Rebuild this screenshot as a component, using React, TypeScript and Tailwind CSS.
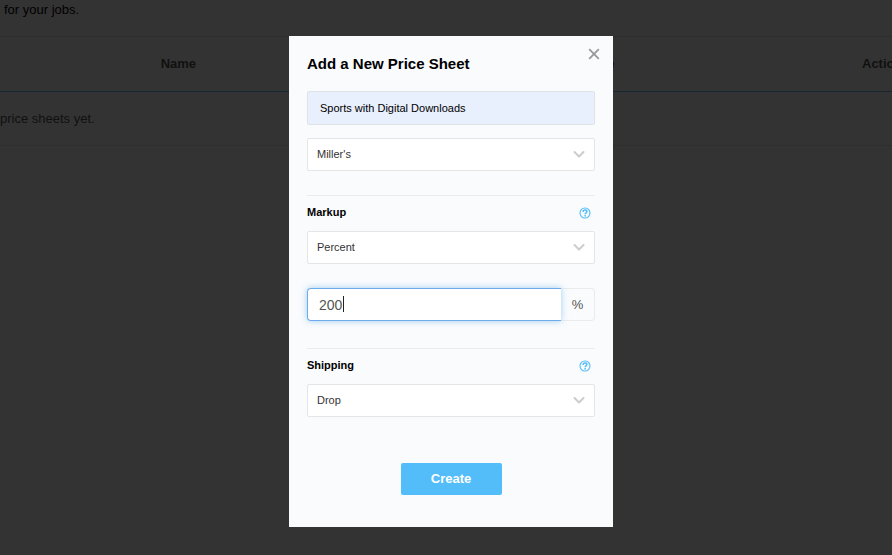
import { useState } from "react";
import type { ReactNode } from "react";

const vendors = ["Miller's", "WHCC", "Bay Photo"];
const markupTypes = ["Percent", "Fixed"];
const shippingTypes = ["Drop", "Bulk"];

function HelpIcon() {
  return (
    <svg width="12" height="12" viewBox="0 0 12 12" fill="none" stroke="#53bdf9" aria-hidden="true">
      <circle cx="6" cy="6" r="5" strokeWidth="1.1" />
      <path d="M4.1 4.9C4.1 3.7 4.9 3 6 3s1.9.7 1.9 1.6c0 1.3-1.8 1.3-1.8 2.6" strokeWidth="1.5" />
      <path d="M6.1 7.9v1.5" strokeWidth="1.5" />
    </svg>
  );
}

type SelectProps = {
  id: string;
  label?: string;
  options: string[];
};

function Select({ id, label, options }: SelectProps) {
  const [value, setValue] = useState(options[0]);

  return (
    <div className="relative">
      <select
        id={id}
        aria-label={label}
        value={value}
        onChange={(e) => setValue(e.target.value)}
        className="block h-[33px] w-full appearance-none rounded-xs border border-[#e3e5e7] bg-white pr-8 pl-[9px] text-[11px] text-[#333] outline-none"
      >
        {options.map((option) => (
          <option key={option}>{option}</option>
        ))}
      </select>
      <svg
        className="pointer-events-none absolute top-3 right-[10px]"
        width="12"
        height="8"
        viewBox="0 0 12 8"
        fill="none"
        stroke="#ccc"
        strokeWidth="2"
        strokeLinecap="round"
        strokeLinejoin="round"
        aria-hidden="true"
      >
        <path d="M1.5 2L6 6.5 10.5 2" />
      </svg>
    </div>
  );
}

function SectionHeader({ htmlFor, children }: { htmlFor: string; children: ReactNode }) {
  return (
    <div className="flex h-9 items-start justify-between border-t border-[#e9ebed] pt-2 pr-1">
      <label htmlFor={htmlFor} className="text-[11px] leading-4 font-bold text-black">
        {children}
      </label>
      <button type="button" aria-label="Help" className="flex h-[18px] items-center">
        <HelpIcon />
      </button>
    </div>
  );
}

function PriceSheetTable() {
  return (
    <main className="overflow-hidden">
      <p className="h-9 px-1 text-[13px] leading-5 text-black">for your jobs.</p>
      <table className="w-full table-fixed border-collapse text-[13px] whitespace-nowrap">
        <thead>
          <tr className="h-[55px] border-t border-b border-t-[#e6e6e6] border-b-[#6fc3f5] text-[#555]">
            <th className="w-[40%] font-bold">Name</th>
            <th className="font-bold">Type</th>
            <th className="w-[49px] pl-[19px] text-left font-bold">Actions</th>
          </tr>
        </thead>
        <tbody>
          <tr className="h-[54px] border-b border-[#e6e6e6] text-[#555]">
            <td colSpan={3}>price sheets yet.</td>
          </tr>
        </tbody>
      </table>
    </main>
  );
}

export default function App() {
  const [name, setName] = useState("Sports with Digital Downloads");
  const [amount, setAmount] = useState("200");

  return (
    <div className="min-h-screen bg-white font-['Liberation_Sans',Arial,sans-serif]">
      <PriceSheetTable />

      {/* Modal */}
      <div className="fixed inset-0 flex items-start justify-center overflow-y-auto bg-black/80 py-9 pl-[10px]">
        <form
          role="dialog"
          aria-labelledby="modal-title"
          onSubmit={(e) => e.preventDefault()}
          className="relative w-full max-w-[324px] bg-[#f9fbfd] px-[18px] pt-[18px] pb-8"
        >
          <button type="button" aria-label="Close" className="absolute top-3 right-[13px]">
            <svg width="12" height="12" viewBox="0 0 12 12" stroke="#999" strokeWidth="1.8" aria-hidden="true">
              <path d="M1.2 1.2l9.6 9.6M10.8 1.2l-9.6 9.6" />
            </svg>
          </button>

          <h2 id="modal-title" className="text-[15px] leading-5 font-bold text-black">
            Add a New Price Sheet
          </h2>

          <input
            type="text"
            aria-label="Price sheet name"
            value={name}
            onChange={(e) => setName(e.target.value)}
            className="mt-[17px] block h-[34px] w-full rounded-xs border border-[#e0e3e8] bg-[#e8effd] px-3 text-[11px] text-black outline-none"
          />
          <div className="mt-[13px]">
            <Select id="vendor" label="Vendor" options={vendors} />
          </div>

          <div className="mt-6">
            <SectionHeader htmlFor="markup">Markup</SectionHeader>
            <Select id="markup" options={markupTypes} />
            <div className="mt-6 flex h-[33px]">
              <div className="relative flex-1">
                <input
                  type="text"
                  inputMode="numeric"
                  aria-label="Markup amount"
                  value={amount}
                  onChange={(e) => setAmount(e.target.value)}
                  className="h-full w-full rounded-l border border-r-0 border-[#6cacea] bg-white px-[11px] text-[14px] text-[#555] caret-transparent shadow-[0_0_6px_rgba(102,175,233,0.6)] outline-none"
                />
                <span className="pointer-events-none absolute top-2 left-9 h-4 w-px bg-[#222]" />
              </div>
              <span className="flex w-[34px] items-center justify-center rounded-r border border-l-0 border-[#e9ebed] text-[13px] text-[#555]">
                %
              </span>
            </div>
          </div>

          <div className="mt-[27px]">
            <SectionHeader htmlFor="shipping">Shipping</SectionHeader>
            <Select id="shipping" options={shippingTypes} />
          </div>

          <button
            type="submit"
            className="mx-auto mt-[46px] block h-8 w-[101px] rounded-xs bg-[#53bdf9] text-[13px] font-bold text-white"
          >
            Create
          </button>
        </form>
      </div>
    </div>
  );
}
